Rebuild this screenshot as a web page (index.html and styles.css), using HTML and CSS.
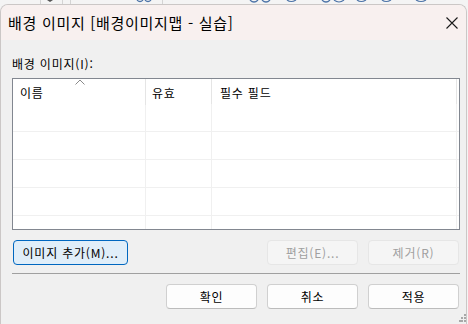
FILE: index.html
```html
<!DOCTYPE html>
<html lang="ko">
<head>
    <meta charset="UTF-8">
    <meta name="viewport" content="width=device-width, initial-scale=1.0">
    <title>배경 이미지</title>
    <link rel="stylesheet" href="styles.css">
</head>
<body>
<div class="backdrop">
    <svg width="468" height="4" viewBox="0 0 468 4">
        <line x1="40.5" y1="0" x2="40.5" y2="4" stroke="#d4d4d4"/>
        <path d="M47 0 L53 0 L50 2 Z" fill="#555"/>
        <line x1="62.5" y1="0" x2="62.5" y2="4" stroke="#d4d4d4"/>
        <line x1="70.5" y1="0" x2="70.5" y2="4" stroke="#d4d4d4"/>
        <line x1="162.5" y1="0" x2="162.5" y2="4" stroke="#d4d4d4"/>
        <g fill="none" stroke="#4d74a8" stroke-width="1.2">
            <path d="M137 0 q3 3 6 0 M145 0 q3 3 6 0"/>
            <path d="M250 0 q4 4 8 0 M262 0 q4 4 8 0"/>
            <path d="M287 0 q4 3 9 0"/>
            <path d="M322 0 q4 4 8 0 M334 0 q5 4 10 0"/>
            <path d="M357 0 q4 3 9 0"/>
            <path d="M382 0 q4 3 9 0"/>
            <path d="M416 0 q5 3 10 0"/>
        </g>
    </svg>
</div>
<div class="dialog">
    <div class="titlebar">
        <span class="title">배경 이미지 [배경이미지맵 - 실습]</span>
        <span class="close">
            <svg width="12" height="12" viewBox="0 0 12 12">
                <path d="M0.5 0.5 L11.5 11.5 M11.5 0.5 L0.5 11.5" stroke="#1a1a1a" stroke-width="1.1" fill="none"/>
            </svg>
        </span>
    </div>
    <div class="content">
        <div class="list-label">배경 이미지(I):</div>
        <div class="listbox">
            <div class="list-row list-head">
                <div class="cell sorted">이름
                    <svg class="sort-arrow" width="10" height="6" viewBox="0 0 10 6">
                        <path d="M0.5 5.5 L5 1 L9.5 5.5" stroke="#8a8a8a" fill="none"/>
                    </svg>
                </div>
                <div class="cell">유효</div>
                <div class="cell">필수 필드</div>
                <div class="cell fill"></div>
            </div>
            <div class="list-body">
                <div class="list-row"><div class="cell"></div><div class="cell"></div><div class="cell"></div><div class="cell fill"></div></div>
                <div class="list-row"><div class="cell"></div><div class="cell"></div><div class="cell"></div><div class="cell fill"></div></div>
                <div class="list-row"><div class="cell"></div><div class="cell"></div><div class="cell"></div><div class="cell fill"></div></div>
                <div class="list-row"><div class="cell"></div><div class="cell"></div><div class="cell"></div><div class="cell fill"></div></div>
                <div class="list-row"><div class="cell"></div><div class="cell"></div><div class="cell"></div><div class="cell fill"></div></div>
            </div>
        </div>
        <div class="list-actions">
            <button class="btn btn-default btn-wide" type="button">이미지 추가(M)...</button>
            <span class="spacer"></span>
            <button class="btn" type="button" disabled>편집(E)...</button>
            <button class="btn" type="button" disabled>제거(R)</button>
        </div>
        <div class="separator"></div>
        <div class="dialog-buttons">
            <button class="btn" type="button">확인</button>
            <button class="btn" type="button">취소</button>
            <button class="btn" type="button">적용</button>
            <svg class="grip" width="7" height="9" viewBox="0 0 7 9">
                <g fill="#a8a8a8">
                    <rect x="5" y="1" width="2" height="2"/>
                    <rect x="2" y="4" width="2" height="2"/>
                    <rect x="5" y="4" width="2" height="2"/>
                    <rect x="0" y="7" width="2" height="2"/>
                    <rect x="2" y="7" width="2" height="2"/>
                    <rect x="5" y="7" width="2" height="2"/>
                </g>
            </svg>
        </div>
    </div>
</div>
</body>
</html>
```

FILE: styles.css
```css
* {
    box-sizing: border-box;
}
html, body {
    margin: 0;
    width: 468px;
    height: 324px;
    overflow: hidden;
    background: #f4f4f4;
    font-family: "Noto Sans CJK KR", "Noto Sans", sans-serif;
    font-size: 12px;
    letter-spacing: 0.8px;
    color: #000;
}
.backdrop {
    height: 4px;
    overflow: hidden;
}
.backdrop svg {
    display: block;
}
.dialog {
    width: 467px;
    height: 320px;
    background: #f0f0f0;
    border: 1px solid #cbc7c6;
    border-bottom: none;
    border-radius: 8px 8px 0 0;
    overflow: hidden;
}
.titlebar {
    height: 35px;
    background: #f8f0ef;
    display: flex;
    align-items: center;
    padding: 0 8px 0 7px;
}
.title {
    font-size: 15px;
    line-height: 20px;
    letter-spacing: 0.7px;
}
.close {
    margin-left: auto;
    display: flex;
    padding-top: 1px;
}
.content {
    padding: 15px 6px 0 11px;
}
.list-label {
    line-height: 18px;
    height: 18px;
}
.listbox {
    margin-top: 5px;
    height: 152px;
    background: #fff;
    border: 1px solid #828790;
    overflow: hidden;
}
.list-row {
    display: grid;
    grid-template-columns: 133px 66px 245px 1fr;
    height: 28px;
    border-bottom: 1px solid #f0f0f0;
}
.list-head {
    height: 25px;
    border-bottom: none;
}
.cell {
    border-right: 1px solid #f0f0f0;
    padding-left: 7px;
}
.list-head .cell {
    border-right-color: #e5e5e5;
    line-height: 25px;
    padding-top: 1px;
}
.list-head .cell:nth-child(2) {
    padding-left: 6px;
}
.list-head .cell:nth-child(3) {
    padding-left: 8px;
}
.cell.fill {
    border-right: none;
}
.sorted {
    position: relative;
}
.sort-arrow {
    position: absolute;
    left: 62px;
    top: 0;
}
.list-actions,
.dialog-buttons {
    display: flex;
    gap: 10px;
    padding: 0 1px;
}
.list-actions {
    margin-top: 10px;
}
.spacer {
    flex: 1;
}
.btn {
    width: 91px;
    height: 25px;
    padding: 0;
    font-family: inherit;
    font-size: 12px;
    letter-spacing: inherit;
    line-height: 20px;
    color: #000;
    background: #fdfdfd;
    border: 1px solid #d0d0d0;
    border-bottom-color: #bcbcbc;
    border-radius: 4px;
}
.btn-wide {
    width: 115px;
}
.btn-default {
    background: #e0eef9;
    border: 1px solid #0067c0;
}
.btn:disabled {
    background: #f5f5f5;
    border-color: #e6e6e6;
    color: #a0a0a0;
}
.separator {
    height: 1px;
    background: #a0a0a0;
    margin: 8px 0 10px;
}
.dialog-buttons {
    justify-content: flex-end;
    position: relative;
}
.grip {
    position: absolute;
    right: -6px;
    top: 29px;
}
```
